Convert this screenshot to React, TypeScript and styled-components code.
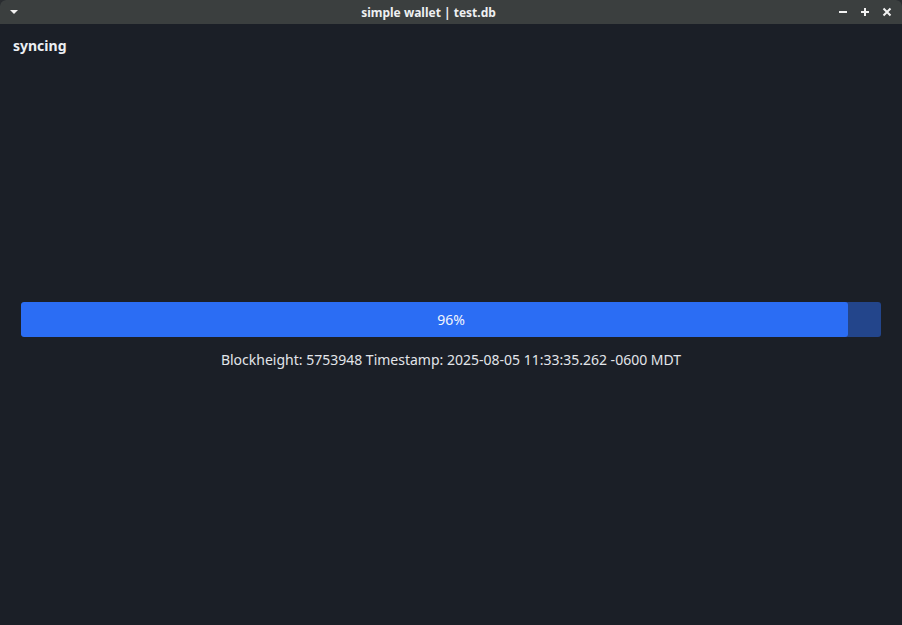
import React from "react";
import styled, { createGlobalStyle } from "styled-components";

const Global = createGlobalStyle`
  html, body { margin: 0; padding: 0; background: #2a2d30; }
  body { font-family: "Noto Sans", "Open Sans", sans-serif; }
  * { box-sizing: border-box; }
`;

const Window = styled.div`
  width: 902px;
  height: 625px;
  display: flex;
  flex-direction: column;
  background: #1b1f27;
  border-radius: 6px 6px 0 0;
  overflow: hidden;
`;

const TitleBar = styled.div`
  height: 24px;
  flex: none;
  background: #3b3f3f;
  display: grid;
  grid-template-columns: auto 1fr auto;
  align-items: center;
  padding: 0 10px 0 9px;
  color: #f0f0f0;
`;

const TitleText = styled.div`
  font-size: 12px;
  font-weight: 700;
  text-align: center;
  color: #eef0f2;
`;

const Controls = styled.div`
  display: flex;
  gap: 12px;
  align-items: center;
`;

const Content = styled.div`
  flex: 1;
  display: flex;
  flex-direction: column;
  padding: 12px 21px 0 13px;
`;

const Heading = styled.div`
  font-size: 14px;
  font-weight: 700;
  color: #eceff3;
  line-height: 20px;
`;

const Center = styled.div`
  margin-top: 246px;
  padding-left: 8px;
  display: flex;
  flex-direction: column;
  align-items: stretch;
`;

const Track = styled.div`
  height: 35px;
  background: #23458b;
  border-radius: 3px;
  position: relative;
  overflow: hidden;
`;

const Fill = styled.div`
  height: 100%;
  background: #2b6df4;
  border-radius: 3px;
`;

const Label = styled.div`
  position: absolute;
  inset: 0;
  display: flex;
  align-items: center;
  justify-content: center;
  font-size: 14px;
  color: #f2f5fd;
`;

const Info = styled.div`
  margin-top: 13px;
  text-align: center;
  font-size: 14px;
  color: #e2e5ea;
  line-height: 20px;
`;

export default function App() {
  const pct = 96;
  return (
    <>
      <Global />
      <Window>
        <TitleBar>
          <svg width="10" height="6" viewBox="0 0 10 6">
            <path d="M1 1 L9 1 L5 5 Z" fill="#f2f2f2" />
          </svg>
          <TitleText>simple wallet | test.db</TitleText>
          <Controls>
            <svg width="10" height="10" viewBox="0 0 10 10">
              <rect x="1" y="4" width="8" height="2" fill="#f2f2f2" />
            </svg>
            <svg width="10" height="10" viewBox="0 0 10 10">
              <rect x="1" y="4" width="8" height="2" fill="#f2f2f2" />
              <rect x="4" y="1" width="2" height="8" fill="#f2f2f2" />
            </svg>
            <svg width="10" height="10" viewBox="0 0 10 10">
              <path d="M1.5 1.5 L8.5 8.5 M8.5 1.5 L1.5 8.5" stroke="#f2f2f2" strokeWidth="2" />
            </svg>
          </Controls>
        </TitleBar>
        <Content>
          <Heading>syncing</Heading>
          <Center>
            <Track>
              <Fill style={{ width: `${(827 / 860) * 100}%` }} />
              <Label>{pct}%</Label>
            </Track>
            <Info>Blockheight: 5753948 Timestamp: 2025-08-05 11:33:35.262 -0600 MDT</Info>
          </Center>
        </Content>
      </Window>
    </>
  );
}
